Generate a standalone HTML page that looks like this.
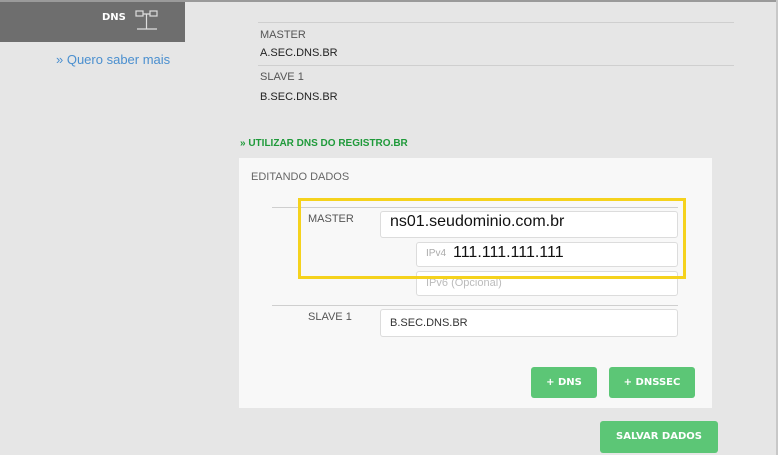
<!DOCTYPE html>
<html><head><meta charset="utf-8"><style>
*{margin:0;padding:0;box-sizing:border-box}
body{width:778px;height:455px;background:#e6e6e6;font-family:"Liberation Sans",sans-serif;position:relative;overflow:hidden;color:#333}
.a{position:absolute}
.ln{position:absolute;height:1px;background:#cfcfcf}
.inp{position:absolute;background:#fff;border:1px solid #dcdcdc;border-radius:3px}
.lbl{font-size:11px;color:#555}
.btn{position:absolute;background:#5cc676;border-radius:3px;color:#fff;font-weight:bold;font-size:10px;text-align:center;font-family:"DejaVu Sans",sans-serif}
</style></head><body>
<div class="a" style="left:0;top:0;width:778px;height:2px;background:#9a9a9a"></div>
<div class="a" style="left:776px;top:0;width:2px;height:455px;background:#c8c8c8"></div>
<div class="a" style="left:0;top:2px;width:185px;height:40px;background:#6e6e6e"></div>
<div class="a" style="left:102px;top:12px;color:#fff;font-weight:bold;font-size:10px;font-family:'DejaVu Sans',sans-serif">DNS</div>
<svg class="a" style="left:134px;top:9px" width="26" height="24" viewBox="0 0 26 24" fill="none" stroke="#ddd" stroke-width="1.2"><rect x="2" y="2" width="7" height="5"/><rect x="16" y="2" width="7" height="5"/><path d="M9 5H16M12.5 5V20M3 20H23"/></svg>
<div class="a" style="left:56px;top:52px;color:#4a8fcf;font-size:13px">» Quero saber mais</div>
<div class="ln" style="left:258px;top:22px;width:476px"></div>
<div class="a lbl" style="left:260px;top:29px">MASTER</div>
<div class="a" style="left:260px;top:47px;font-size:11px;color:#222">A.SEC.DNS.BR</div>
<div class="ln" style="left:258px;top:65px;width:476px"></div>
<div class="a lbl" style="left:260px;top:71px">SLAVE 1</div>
<div class="a" style="left:260px;top:91px;font-size:11px;color:#222">B.SEC.DNS.BR</div>
<div class="a" style="left:240px;top:138px;color:#1f9a3a;font-weight:bold;font-size:10px">» UTILIZAR DNS DO REGISTRO.BR</div>
<div class="a" style="left:239px;top:158px;width:473px;height:250px;background:#f8f8f8"></div>
<div class="a lbl" style="left:251px;top:171px;color:#666">EDITANDO DADOS</div>
<div class="ln" style="left:272px;top:207px;width:406px"></div>
<div class="a lbl" style="left:308px;top:213px">MASTER</div>
<div class="inp" style="left:380px;top:211px;width:298px;height:27px"></div>
<div class="a" style="left:390px;top:213px;font-size:16px;color:#111">ns01.seudominio.com.br</div>
<div class="inp" style="left:416px;top:242px;width:262px;height:25px"></div>
<div class="a" style="left:426px;top:248px;font-size:10px;color:#aaa">IPv4</div>
<div class="a" style="left:453px;top:244px;font-size:16px;color:#111">111.111.111.111</div>
<div class="inp" style="left:416px;top:271px;width:262px;height:25px"></div>
<div class="a" style="left:426px;top:277px;font-size:11px;color:#bbb">IPv6 (Opcional)</div>
<div class="a" style="left:298px;top:198px;width:388px;height:81px;border:3px solid #f5d21d"></div>
<div class="ln" style="left:272px;top:305px;width:406px"></div>
<div class="a lbl" style="left:308px;top:311px">SLAVE 1</div>
<div class="inp" style="left:380px;top:309px;width:298px;height:28px"></div>
<div class="a" style="left:390px;top:317px;font-size:11px;color:#333">B.SEC.DNS.BR</div>
<div class="btn" style="left:531px;top:367px;width:66px;height:31px;line-height:31px">+ DNS</div>
<div class="btn" style="left:609px;top:367px;width:86px;height:31px;line-height:31px">+ DNSSEC</div>
<div class="btn" style="left:600px;top:421px;width:118px;height:32px;line-height:32px">SALVAR DADOS</div>
</body></html>
